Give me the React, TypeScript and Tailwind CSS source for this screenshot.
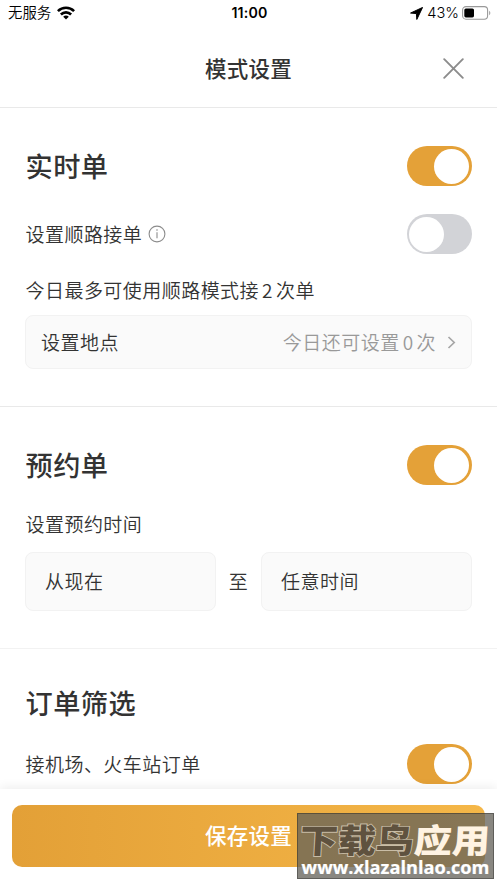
import { useState } from "react";
import clsx from "clsx";

type ToggleProps = {
  label: string;
  checked: boolean;
  onChange: (value: boolean) => void;
};

function Toggle({ label, checked, onChange }: ToggleProps) {
  return (
    <button
      type="button"
      role="switch"
      aria-checked={checked}
      aria-label={label}
      onClick={() => onChange(!checked)}
      className={clsx(
        "mr-[0.5px] flex h-[39.5px] w-[65px] shrink-0 items-center rounded-full pr-[2.5px] pl-0.5",
        checked ? "justify-end bg-[#e4a138]" : "justify-start bg-[#d2d3d7]",
      )}
    >
      <span className="h-[35px] w-[35px] rounded-full bg-white" />
    </button>
  );
}

function StatusBar() {
  return (
    <div className="grid h-[26px] grid-cols-3 items-center pr-[6px] pl-2 font-['Inter','Noto_Sans_CJK_SC',sans-serif] tracking-normal text-black">
      <div className="flex items-center gap-[6px] text-[14.4px] leading-none">
        <span>无服务</span>
        <svg width="18" height="14" viewBox="0 0 18 14" fill="none" stroke="#000" strokeWidth="2.6">
          <path d="M.9 5.1C5.4.6 12.6.6 17.1 5.1" />
          <path d="M3.9 8.5c2.9-2.9 7.3-2.9 10.2 0" />
          <path d="M6.2 10.7c1.6-1.5 4-1.5 5.6 0L9 13.5z" fill="#000" stroke="none" />
        </svg>
      </div>
      <span className="text-center text-[14.2px] leading-none font-semibold tracking-[0.2px]">11:00</span>
      <div className="flex items-center justify-end text-[14.6px] leading-none">
        <svg className="mr-1" width="13" height="13" viewBox="0 0 12 12">
          <path d="M11.6.4.5 5.6l5.4.5.4 5.4z" fill="#000" stroke="#000" strokeWidth=".9" strokeLinejoin="round" />
        </svg>
        <span>43%</span>
        <svg className="ml-[3px]" width="29" height="14" viewBox="0 0 29 14">
          <rect x=".6" y=".6" width="25" height="12.6" rx="3.4" fill="none" stroke="#999" strokeWidth="1.1" />
          <rect x="2.3" y="2.4" width="9.7" height="9" rx="1.6" fill="#000" />
          <path d="M27.2 4.8c1.5.7 1.5 3.7 0 4.4z" fill="#999" />
        </svg>
      </div>
    </div>
  );
}

export default function App() {
  const [realtime, setRealtime] = useState(true);
  const [onRoute, setOnRoute] = useState(false);
  const [reserve, setReserve] = useState(true);
  const [station, setStation] = useState(true);

  return (
    <div className="relative flex h-[883px] w-[497px] flex-col overflow-hidden bg-white font-['Noto_Sans_CJK_SC',sans-serif] text-[19px] leading-7 font-[350] tracking-[0.46px] text-[#333]">
      <StatusBar />

      <header className="grid h-[82px] shrink-0 grid-cols-[1fr_auto_1fr] items-center border-b border-[#e9e9e9] px-[33px] pt-[3px]">
        <h1 className="col-start-2 text-center text-[21.5px] font-medium tracking-[0.3px]">模式设置</h1>
        <button type="button" aria-label="关闭" className="justify-self-end">
          <svg width="21" height="21" viewBox="0 0 21 21" stroke="#8c8c8c" strokeWidth="1.9" strokeLinecap="round">
            <path d="M1.2 1.2l18.6 18.6M19.8 1.2L1.2 19.8" />
          </svg>
        </button>
      </header>

      {/* Real-time orders */}
      <section className="h-[299px] shrink-0 border-b border-[#e9e9e9] px-[25px] pt-[38px]">
        <div className="flex h-10 items-center justify-between">
          <h2 className="pb-[3px] pl-[0.5px] text-[27.2px] font-medium">实时单</h2>
          <Toggle label="实时单" checked={realtime} onChange={setRealtime} />
        </div>
        <div className="mt-7 flex h-10 items-center justify-between">
          <div className="flex items-center gap-[6px] pl-[0.5px]">
            <span>设置顺路接单</span>
            <svg width="18" height="18" viewBox="0 0 18 18" fill="none" stroke="#8c8c8c" strokeWidth="1.1">
              <circle cx="9" cy="9" r="7.9" />
              <path d="M9 7.2v6" />
              <circle cx="9" cy="5" r=".8" fill="#8c8c8c" stroke="none" />
            </svg>
          </div>
          <Toggle label="设置顺路接单" checked={onRoute} onChange={setOnRoute} />
        </div>
        <p className="mt-[22px] pl-[0.5px]">
          今日最多可使用顺路模式接<span className="mx-[3px]">2</span>次单
        </p>
        <button
          type="button"
          className="mt-[11px] flex h-[54px] w-full items-center justify-between rounded-lg border border-[#f2f2f2] bg-[#fafafa] px-[15px]"
        >
          <span>设置地点</span>
          <span className="flex items-center gap-[11px] text-[#999]">
            <span>
              今日还可设置<span className="mx-[3px]">0</span>次
            </span>
            <svg width="9" height="13" viewBox="0 0 9 13" fill="none" stroke="#a6a6a6" strokeWidth="1.7">
              <path d="M1.5 1l5.7 5.5L1.5 12" />
            </svg>
          </span>
        </button>
      </section>

      {/* Reserved orders */}
      <section className="h-[242px] shrink-0 border-b border-[#f2f2f2] px-[25px] pt-[38px]">
        <div className="flex h-10 items-center justify-between">
          <h2 className="pb-[3px] pl-[0.5px] text-[27.2px] font-medium">预约单</h2>
          <Toggle label="预约单" checked={reserve} onChange={setReserve} />
        </div>
        <p className="mt-[25px] pl-[0.5px]">设置预约时间</p>
        <div className="mt-[14px] flex items-center justify-between">
          <button type="button" className="h-[59px] w-[191px] rounded-lg border border-[#f2f2f2] bg-[#fafafa] px-[19px] pb-0.5 text-left">
            从现在
          </button>
          <span className="pb-0.5">至</span>
          <button type="button" className="h-[59px] w-[211px] rounded-lg border border-[#f2f2f2] bg-[#fafafa] px-[19px] pb-0.5 text-left">
            任意时间
          </button>
        </div>
      </section>

      {/* Order filter */}
      <section className="shrink-0 px-[25px] pt-[35px]">
        <h2 className="flex h-10 items-center pb-[4px] pl-[0.5px] text-[27.2px] font-medium">订单筛选</h2>
        <div className="mt-5 flex h-10 items-center justify-between">
          <span className="pl-[0.5px]">接机场、火车站订单</span>
          <Toggle label="接机场、火车站订单" checked={station} onChange={setStation} />
        </div>
      </section>

      <footer className="absolute inset-x-0 bottom-0 h-[94px] bg-white px-3 pt-4 shadow-[0_-2px_10px_rgba(0,0,0,0.07)]">
        <button
          type="button"
          className="h-[62px] w-full rounded-[10px] bg-linear-to-r from-[#e3a037] to-[#f5b748] pb-0.5 text-[21.5px] font-medium tracking-[0.3px] text-white"
        >
          保存设置
        </button>
      </footer>

      {/* Site watermark */}
      <div className="absolute right-[3px] bottom-1 flex h-[66px] w-[197px] flex-col items-center border border-black/30 bg-[rgba(100,97,90,0.76)] tracking-normal whitespace-nowrap">
        <div className="mt-1 flex h-[42px] -skew-x-3 scale-y-88 items-center text-[38px] leading-none font-black">
          <span className="text-[#5f523f] [paint-order:stroke_fill] [-webkit-text-stroke:2px_#c9bda6]">下载鸟</span>
          <span className="text-[#fff3e2]">应用</span>
        </div>
        <div className="-mt-[2px] font-['Open_Sans',sans-serif] text-[18.2px] leading-none font-bold text-white [-webkit-text-stroke:0.2px_#fff]">
          www.xlazalnlao.com
        </div>
      </div>
    </div>
  );
}
